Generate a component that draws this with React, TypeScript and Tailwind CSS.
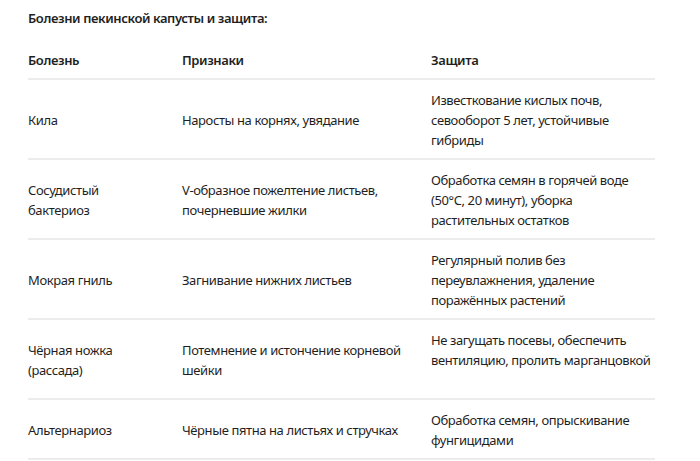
import React from 'react';

const rows = [
  ['Кила', 'Наросты на корнях, увядание', 'Известкование кислых почв, севооборот 5 лет, устойчивые гибриды'],
  ['Сосудистый бактериоз', 'V-образное пожелтение листьев, почерневшие жилки', 'Обработка семян в горячей воде (50°C, 20 минут), уборка растительных остатков'],
  ['Мокрая гниль', 'Загнивание нижних листьев', 'Регулярный полив без переувлажнения, удаление поражённых растений'],
  ['Чёрная ножка (рассада)', 'Потемнение и истончение корневой шейки', 'Не загущать посевы, обеспечить вентиляцию, пролить марганцовкой'],
  ['Альтернариоз', 'Чёрные пятна на листьях и стручках', 'Обработка семян, опрыскивание фунгицидами'],
];

const pad = ['pr-7', 'pr-3', 'pr-0'];

export default function App() {
  return (
    <div className="w-[700px] h-[461px] overflow-hidden bg-white pl-7 pt-2 text-[13px] leading-5 tracking-[-0.4px] text-[#1f1f1f] font-['Noto_Sans',sans-serif]">
      <p className="font-semibold">Болезни пекинской капусты и защита:</p>
      <table className="mt-3 w-[627px] table-fixed border-collapse">
        <colgroup>
          <col className="w-[154px]" />
          <col className="w-[249px]" />
          <col />
        </colgroup>
        <thead>
          <tr className="border-b-2 border-[#ececec]">
            <th className="pt-2.5 pb-2 pr-3 text-left font-semibold">Болезнь</th>
            <th className="pt-2.5 pb-2 pr-3 text-left font-semibold">Признаки</th>
            <th className="pt-2.5 pb-2 pr-0 text-left font-semibold">Защита</th>
          </tr>
        </thead>
        <tbody>
          {rows.map((r, ri) => (
            <tr key={r[0]} className="border-b-2 border-[#ececec]">
              {r.map((c, i) => (
                <td key={i} className={`pt-2.5 pb-2 align-middle ${pad[i]}`}>
                  {c}
                  {ri === 3 && i === 2 && (
                    <>
                      <br />
                      {'\u00a0'}
                    </>
                  )}
                </td>
              ))}
            </tr>
          ))}
        </tbody>
      </table>
    </div>
  );
}
